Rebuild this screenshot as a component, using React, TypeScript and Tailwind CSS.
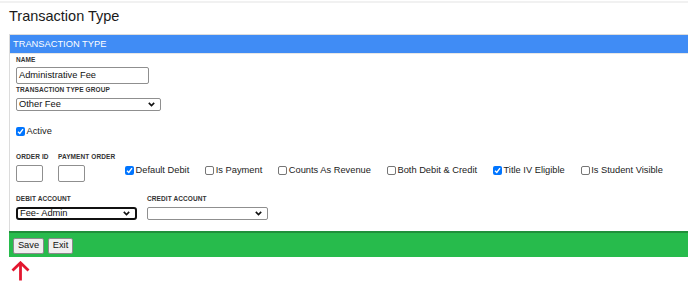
import React from 'react';

const font = { fontFamily: '"Liberation Sans", Arial, sans-serif' };

const Label: React.FC<{ children: React.ReactNode; className?: string }> = ({ children, className = '' }) => (
  <div className={`text-[6.5px] leading-[8px] font-bold text-[#333] tracking-[0.1px] ${className}`}>{children}</div>
);

const Chevron: React.FC = () => (
  <svg width="7" height="5" viewBox="0 0 7 5" className="shrink-0">
    <path d="M0.8 0.9 L3.5 3.6 L6.2 0.9" fill="none" stroke="#111" strokeWidth="1.6" />
  </svg>
);

const FakeSelect: React.FC<{ value?: string; width: string; focused?: boolean }> = ({ value, width, focused }) => (
  <div
    className={`${width} h-[13px] flex items-center justify-between bg-white pl-[2px] pr-[5px] text-[9.3px] leading-none text-[#111] ${
      focused ? 'border-2 border-[#111] rounded-[3px] pl-[1px] pr-[4px]' : 'border border-[#8f8f8f] rounded-[2px]'
    }`}
  >
    <span>{value}</span>
    <Chevron />
  </div>
);

const Check: React.FC<{ checked?: boolean }> = ({ checked }) =>
  checked ? (
    <span className="w-[9px] h-[9px] rounded-[2px] bg-[#0075ff] flex items-center justify-center shrink-0">
      <svg width="7" height="7" viewBox="0 0 7 7">
        <path d="M1 3.8 L2.8 5.5 L6 1.2" fill="none" stroke="#fff" strokeWidth="1.4" />
      </svg>
    </span>
  ) : (
    <span className="w-[9px] h-[9px] rounded-[2px] border border-[#767676] bg-white shrink-0" />
  );

const CheckItem: React.FC<{ label: string; checked?: boolean }> = ({ label, checked }) => (
  <div className="flex items-center gap-[1.5px]">
    <Check checked={checked} />
    <span className="text-[9.3px] leading-none text-[#222]">{label}</span>
  </div>
);

const Button: React.FC<{ children: React.ReactNode; width: string }> = ({ children, width }) => (
  <button
    className={`${width} h-[16px] bg-[#efefef] border border-[#8a8a8a] rounded-[2px] text-[9.3px] leading-none text-[#111] flex items-center justify-center`}
  >
    {children}
  </button>
);

export default function App() {
  return (
    <div className="w-[688px] h-[292px] bg-white overflow-hidden" style={font}>
      <div className="mt-px h-[2px] bg-[#f1f1f1]" />
      <div className="h-[31px] pt-[3px] pl-[9px] text-[14.5px] leading-[20px] text-[#1a1a1a]">Transaction Type</div>

      <div className="ml-[9px] border-l border-t border-[#dcdcdc]">
        <div className="h-[18px] bg-[#408cf5] pl-[3px] text-[9.3px] leading-[18px] text-white border-b border-[#e6e6e6] box-content">
          TRANSACTION TYPE
        </div>

        <div className="pl-[6px] pt-[1.5px]">
          <Label>NAME</Label>
          <div className="mt-[3.5px] w-[133px] h-[17px] border border-[#8f8f8f] rounded-[2px] pl-[2px] flex items-center text-[9.3px] leading-none text-[#111]">
            Administrative Fee
          </div>
          <Label className="mt-[1.5px]">TRANSACTION TYPE GROUP</Label>
          <div className="mt-[4.5px]">
            <FakeSelect value="Other Fee" width="w-[145px]" />
          </div>

          <div className="mt-[14px] h-[13px] flex items-center">
            <CheckItem label="Active" checked />
          </div>

          <div className="mt-[14.5px] flex">
            <div className="w-[42px]">
              <Label>ORDER ID</Label>
              <div className="mt-[4.5px] w-[27px] h-[17px] border border-[#8f8f8f] rounded-[2px]" />
            </div>
            <div className="w-[67px]">
              <Label>PAYMENT ORDER</Label>
              <div className="mt-[4.5px] w-[27px] h-[17px] border border-[#8f8f8f] rounded-[2px]" />
            </div>
            <div className="mt-[12px] h-[13px] flex items-center gap-[16px]">
              <CheckItem label="Default Debit" checked />
              <CheckItem label="Is Payment" />
              <CheckItem label="Counts As Revenue" />
              <CheckItem label="Both Debit & Credit" />
              <CheckItem label="Title IV Eligible" checked />
              <CheckItem label="Is Student Visible" />
            </div>
          </div>

          <div className="mt-[13px] flex gap-[10px] pb-[11px]">
            <div>
              <Label>DEBIT ACCOUNT</Label>
              <div className="mt-[4px]">
                <FakeSelect value="Fee- Admin" width="w-[121px]" focused />
              </div>
            </div>
            <div>
              <Label>CREDIT ACCOUNT</Label>
              <div className="mt-[4px]">
                <FakeSelect width="w-[121px]" />
              </div>
            </div>
          </div>
        </div>
      </div>

      <div className="ml-[9px] border-t-2 border-[#1f8f3a] bg-[#27bb4c] h-[26px] pl-[4px] pt-[5px] flex gap-[4px]">
        <Button width="w-[31px]">Save</Button>
        <Button width="w-[25px]">Exit</Button>
      </div>

      <div className="pl-[11px] pt-[4px]">
        <svg width="19" height="20" viewBox="0 0 19 20">
          <path d="M1.5 9.5 L9.5 1.8 L17.5 9.5" fill="none" stroke="#e3172f" strokeWidth="2.8" />
          <path d="M9.5 2 V19.5" fill="none" stroke="#e3172f" strokeWidth="2.8" />
        </svg>
      </div>
    </div>
  );
}
